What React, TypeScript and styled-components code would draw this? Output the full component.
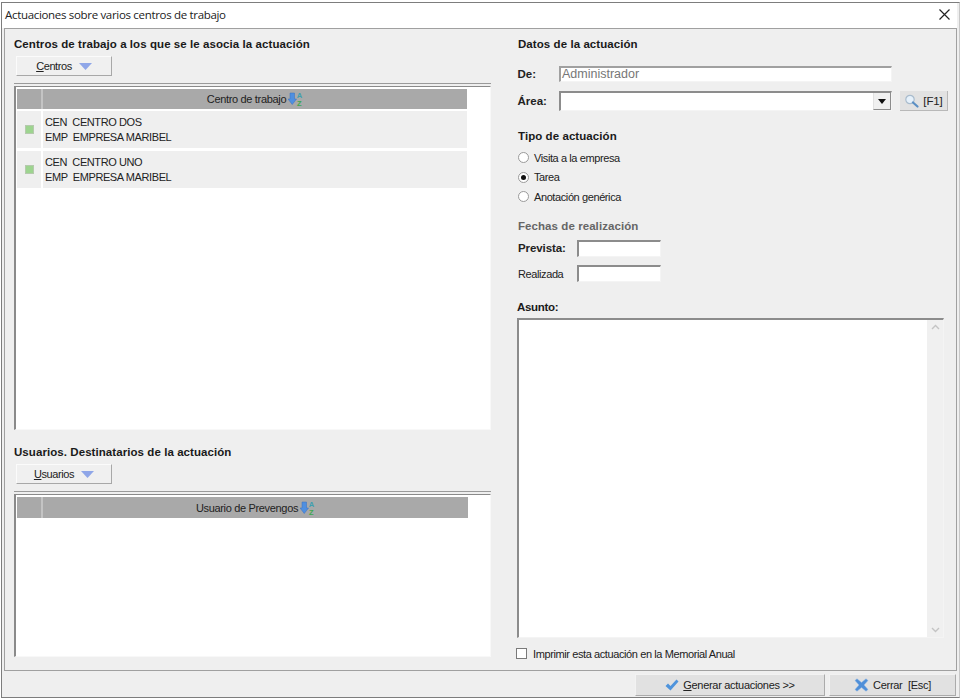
import * as React from 'react';
import styled, { createGlobalStyle } from 'styled-components';

const Check = () => (
  <svg width="14" height="12" viewBox="0 0 14 12">
    <path d="M0.5 7 L3 4.5 L5.5 7 L11.5 0.5 L13.5 2.5 L5.5 11.5 Z" fill="#4f94dc" />
  </svg>
);

const Cross = () => (
  <svg width="15" height="14" viewBox="0 0 15 14">
    <path d="M1 2.5 L3 0.8 L7.5 4.5 L12 0.8 L14 2.5 L10 7 L14 11.5 L12 13.2 L7.5 9.5 L3 13.2 L1 11.5 L5 7 Z" fill="#4f8fd8" stroke="#8cb6e6" strokeWidth="0.5" />
  </svg>
);

const Lens = () => (
  <svg width="15" height="14" viewBox="0 0 15 14">
    <circle cx="6" cy="5.5" r="4.2" fill="#e6f1fb" stroke="#a9bccd" strokeWidth="1.2" />
    <path d="M9 8.5 L13.5 12.5" stroke="#5b8fc4" strokeWidth="2.2" strokeLinecap="round" />
  </svg>
);

const SortIcon = () => (
  <svg width="15" height="16" viewBox="0 0 15 16">
    <path d="M2 2 H6.5 V8 H8.5 L4.25 13.5 L0 8 H2 Z" fill="#4f8fe0" stroke="#3a70c0" strokeWidth="0.5" />
    <text x="8.8" y="7" fontSize="7.5" fontWeight="bold" fill="#3f9fb0" fontFamily="Liberation Sans, sans-serif">A</text>
    <text x="9" y="14.5" fontSize="7.5" fontWeight="bold" fill="#3fa84f" fontFamily="Liberation Sans, sans-serif">Z</text>
  </svg>
);

const Caret = () => (
  <svg width="13" height="7" viewBox="0 0 13 7">
    <path d="M0 0 H13 L6.5 7 Z" fill="#8fa6e8" />
  </svg>
);

const Chevron = ({ down }: { down?: boolean }) => (
  <svg width="9" height="6" viewBox="0 0 9 6">
    <path d={down ? 'M1 1 L4.5 4.5 L8 1' : 'M1 5 L4.5 1.5 L8 5'} fill="none" stroke="#c4c4c4" strokeWidth="1.4" />
  </svg>
);

const centros = ['CENTRO DOS', 'CENTRO UNO'];

export default function App() {
  return (
    <>
      <GlobalStyle />
      <Window>
        <TitleBar>
          <TitleText>Actuaciones sobre varios centros de trabajo</TitleText>
          <CloseGlyph width="11" height="11" viewBox="0 0 11 11">
            <path d="M0.5 0.5 L10.5 10.5 M10.5 0.5 L0.5 10.5" stroke="#222" strokeWidth="1.2" />
          </CloseGlyph>
        </TitleBar>
        <Panel>
          <LeftColumn>
            <SectionTitle>Centros de trabajo a los que se le asocia la actuación</SectionTitle>
            <MenuButton>
              <span><u>C</u>entros</span>
              <Caret />
            </MenuButton>
            <GridFrame $height={347}>
              <GridBox>
                <HeaderRow $width={450} $height={20}>
                  <HeaderCell />
                  <HeaderCell>Centro de trabajo <SortIcon /></HeaderCell>
                </HeaderRow>
                {centros.map((centro) => (
                  <DataRow key={centro}>
                    <StatusCell><StatusDot /></StatusCell>
                    <TextCell>
                      <div>{`CEN  ${centro}`}</div>
                      <div>{'EMP  EMPRESA MARIBEL'}</div>
                    </TextCell>
                  </DataRow>
                ))}
              </GridBox>
            </GridFrame>
            <SecondTitle>Usuarios. Destinatarios de la actuación</SecondTitle>
            <MenuButton>
              <span><u>U</u>suarios</span>
              <Caret />
            </MenuButton>
            <GridFrame $height={166}>
              <GridBox>
                <HeaderRow $width={451} $height={21}>
                  <HeaderCell />
                  <HeaderCell>Usuario de Prevengos <SortIcon /></HeaderCell>
                </HeaderRow>
              </GridBox>
            </GridFrame>
          </LeftColumn>
          <RightColumn>
            <DataTitle>Datos de la actuación</DataTitle>
            <DeRow>
              <FieldLabel>De:</FieldLabel>
              <NameInput>Administrador</NameInput>
            </DeRow>
            <AreaRow>
              <FieldLabel>Área:</FieldLabel>
              <Combo>
                <ComboArrow>
                  <svg width="8" height="5" viewBox="0 0 8 5"><path d="M0 0 H8 L4 5 Z" fill="#111" /></svg>
                </ComboArrow>
              </Combo>
              <LookupButton><Lens /> [F1]</LookupButton>
            </AreaRow>
            <TypeTitle>Tipo de actuación</TypeTitle>
            <RadioGroup>
              <RadioRow><Radio /><span>Visita a la empresa</span></RadioRow>
              <RadioRow><Radio $checked /><span>Tarea</span></RadioRow>
              <RadioRow><Radio /><span>Anotación genérica</span></RadioRow>
            </RadioGroup>
            <DatesTitle>Fechas de realización</DatesTitle>
            <DateRow $top={7}>
              <DateLabel $bold>Prevista:</DateLabel>
              <DateInput />
            </DateRow>
            <DateRow $top={8}>
              <DateLabel>Realizada</DateLabel>
              <DateInput />
            </DateRow>
            <SubjectTitle>Asunto:</SubjectTitle>
            <SubjectBox>
              <ScrollTrack>
                <Chevron />
                <Chevron down />
              </ScrollTrack>
            </SubjectBox>
            <PrintRow>
              <CheckBox />
              <span>Imprimir esta actuación en la Memorial Anual</span>
            </PrintRow>
          </RightColumn>
        </Panel>
        <Footer>
          <FooterButton $width={190}>
            <Check />
            <span><u>G</u>enerar actuaciones &gt;&gt;</span>
          </FooterButton>
          <FooterButton $width={127}>
            <Cross />
            <span>{'Cerrar  [Esc]'}</span>
          </FooterButton>
        </Footer>
      </Window>
    </>
  );
}

const GlobalStyle = createGlobalStyle`
  html, body {
    margin: 0;
    background: #ffffff;
    font-family: "Liberation Sans", Arial, sans-serif;
    font-size: 11px;
    color: #222222;
  }
`;

const Window = styled.div`
  box-sizing: border-box;
  width: 959px;
  height: 696px;
  margin: 2px 0 0 1px;
  padding: 0 2px 0 2px;
  display: flex;
  flex-direction: column;
  background: #efefef;
  border: 1px solid #7d7d7d;
  border-right-color: #c8c8c8;
`;

const TitleBar = styled.div`
  height: 25px;
  box-sizing: border-box;
  flex: none;
  margin-left: -2px;
  padding: 0 7px 2px 3px;
  display: flex;
  align-items: center;
  justify-content: space-between;
  background: #ffffff;
`;

const TitleText = styled.span`
  font-family: "Open Sans", sans-serif;
  font-size: 11.5px;
  letter-spacing: -0.32px;
  color: #222222;
`;

const CloseGlyph = styled.svg`
  display: block;
`;

const Panel = styled.div`
  box-sizing: border-box;
  height: 643px;
  flex: none;
  display: flex;
  gap: 26px;
  padding: 9px 0 0 9px;
  border: 1px solid #a0a0a0;
  background: #efefef;
`;

const LeftColumn = styled.div`
  width: 477px;
  flex: none;
  display: flex;
  flex-direction: column;
`;

const RightColumn = styled.div`
  width: 427px;
  flex: none;
  display: flex;
  flex-direction: column;
`;

const SectionTitle = styled.div`
  height: 13px;
  line-height: 13px;
  font-size: 11.5px;
  font-weight: bold;
  letter-spacing: 0.07px;
  color: #1a1a1a;
  white-space: nowrap;
`;

const SecondTitle = styled(SectionTitle)`
  margin-top: 16px;
`;

const DataTitle = styled(SectionTitle)`
  padding-left: 1px;
`;

const MenuButton = styled.div`
  box-sizing: border-box;
  width: 96px;
  height: 20px;
  margin: 5px 0 0 2px;
  display: flex;
  align-items: center;
  justify-content: center;
  gap: 7px;
  background: #f0f0f0;
  border: 1px solid #fbfbfb;
  border-right-color: #a8a8a8;
  border-bottom-color: #a8a8a8;
  letter-spacing: -0.4px;
`;

const GridFrame = styled.div<{ $height: number }>`
  box-sizing: border-box;
  height: ${(p) => p.$height}px;
  margin-top: 7px;
  padding-top: 2px;
  display: flex;
  border-top: 1px solid #9a9a9a;
`;

const GridBox = styled.div`
  box-sizing: border-box;
  flex: 1;
  padding: 2px 0 0 1px;
  background: #ffffff;
  border-top: 1px solid #8a8a8a;
  border-left: 2px solid #8a8a8a;
  border-right: 1px solid #f8f8f8;
  border-bottom: 1px solid #f8f8f8;
`;

const HeaderRow = styled.div<{ $width: number; $height: number }>`
  width: ${(p) => p.$width}px;
  height: ${(p) => p.$height}px;
  display: grid;
  grid-template-columns: 24px 1fr;
  gap: 2px;
  background: #c4c4c4;
`;

const HeaderCell = styled.div`
  display: flex;
  align-items: center;
  justify-content: center;
  gap: 2px;
  background: #a9a9a9;
  letter-spacing: -0.33px;
  color: #222222;
`;

const DataRow = styled.div`
  width: 450px;
  height: 37px;
  margin-top: 2px;
  margin-bottom: 3px;
  display: grid;
  grid-template-columns: 24px 1fr;
  gap: 2px;
  & + & {
    margin-top: 0;
  }
`;

const StatusCell = styled.div`
  display: flex;
  align-items: center;
  justify-content: center;
  background: #efefef;
`;

const StatusDot = styled.div`
  box-sizing: border-box;
  width: 9px;
  height: 9px;
  background: #9dd48f;
  border: 1px solid #b5c9ad;
`;

const TextCell = styled.div`
  padding: 4px 0 0 2px;
  line-height: 15px;
  background: #efefef;
  white-space: pre;
  letter-spacing: -0.4px;
`;

const DeRow = styled.div`
  height: 16px;
  margin-top: 15px;
  display: flex;
  align-items: center;
`;

const AreaRow = styled.div`
  height: 20px;
  margin-top: 9px;
  display: flex;
  align-items: center;
`;

const FieldLabel = styled.div`
  width: 42px;
  box-sizing: border-box;
  padding-left: 0.5px;
  font-size: 11.5px;
  font-weight: bold;
  flex: none;
`;

const SunkenField = styled.div`
  box-sizing: border-box;
  flex: none;
  background: #ffffff;
  border-top: 2px solid #8c8c8c;
  border-left: 2px solid #8c8c8c;
  border-right: 1px solid #f4f4f4;
  border-bottom: 1px solid #f4f4f4;
`;

const NameInput = styled(SunkenField)`
  width: 333px;
  height: 16px;
  padding-left: 1px;
  line-height: 13px;
  font-size: 12.5px;
  color: #777777;
  border-top-color: #a0a0a0;
  border-left-color: #a0a0a0;
`;

const Combo = styled(SunkenField)`
  width: 333px;
  height: 20px;
  display: flex;
  justify-content: flex-end;
`;

const ComboArrow = styled.div`
  width: 16px;
  display: flex;
  align-items: center;
  justify-content: center;
  background: #f0f0f0;
  border-left: 1px solid #e2e2e2;
  border-right: 1px solid #8c8c8c;
  border-bottom: 1px solid #8c8c8c;
`;

const LookupButton = styled.div`
  box-sizing: border-box;
  width: 48px;
  height: 20px;
  margin-left: 8px;
  flex: none;
  display: flex;
  align-items: center;
  justify-content: center;
  gap: 4px;
  background: #e2e2e2;
  border-right: 1px solid #b8b8b8;
  border-bottom: 1px solid #b8b8b8;
  font-size: 11.5px;
  letter-spacing: -0.1px;
`;

const TypeTitle = styled(SectionTitle)`
  margin-top: 19px;
  padding-left: 1px;
`;

const RadioGroup = styled.div`
  margin-top: 5px;
  display: flex;
  flex-direction: column;
`;

const RadioRow = styled.div`
  height: 19.5px;
  padding-left: 1px;
  display: flex;
  align-items: center;
  gap: 5px;
  letter-spacing: -0.4px;
`;

const Radio = styled.span<{ $checked?: boolean }>`
  box-sizing: border-box;
  width: 11px;
  height: 11px;
  flex: none;
  display: flex;
  align-items: center;
  justify-content: center;
  border-radius: 50%;
  background: #ffffff;
  border: 1px solid #9a9a9a;
  &::after {
    content: '';
    width: 5px;
    height: 5px;
    border-radius: 50%;
    background: ${(p) => (p.$checked ? '#111111' : 'transparent')};
  }
`;

const DatesTitle = styled(SectionTitle)`
  margin-top: 13px;
  padding-left: 1px;
  color: #666666;
`;

const DateRow = styled.div<{ $top: number }>`
  height: 17px;
  margin-top: ${(p) => p.$top}px;
  display: flex;
  align-items: center;
`;

const DateLabel = styled.div<{ $bold?: boolean }>`
  width: 60px;
  box-sizing: border-box;
  padding: ${(p) => (p.$bold ? '0 0 0 1px' : '1px 0 0 1px')};
  flex: none;
  font-size: ${(p) => (p.$bold ? '11.5px' : '11px')};
  font-weight: ${(p) => (p.$bold ? 'bold' : 'normal')};
  letter-spacing: ${(p) => (p.$bold ? '-0.1px' : '-0.4px')};
`;

const DateInput = styled(SunkenField)`
  width: 84px;
  height: 17px;
`;

const SubjectTitle = styled(SectionTitle)`
  margin-top: 19px;
  letter-spacing: -0.3px;
`;

const SubjectBox = styled(SunkenField)`
  width: 427px;
  height: 320px;
  margin-top: 4px;
  display: flex;
  justify-content: flex-end;
`;

const ScrollTrack = styled.div`
  width: 16px;
  padding: 4px 0;
  display: flex;
  flex-direction: column;
  align-items: center;
  justify-content: space-between;
  background: #f0f0f0;
`;

const PrintRow = styled.div`
  height: 12px;
  margin: 10px 0 0 -1px;
  display: flex;
  align-items: center;
  gap: 6px;
  letter-spacing: -0.4px;
`;

const CheckBox = styled.span`
  box-sizing: border-box;
  width: 11px;
  height: 11px;
  flex: none;
  background: #ffffff;
  border: 1px solid #7a7a7a;
`;

const Footer = styled.div`
  flex: 1;
  padding: 3px 1px 0 0;
  display: flex;
  justify-content: flex-end;
  align-items: flex-start;
  gap: 4px;
`;

const FooterButton = styled.div<{ $width: number }>`
  box-sizing: border-box;
  width: ${(p) => p.$width}px;
  height: 22px;
  display: flex;
  align-items: center;
  justify-content: center;
  gap: 4px;
  background: #e1e1e1;
  border-top: 1px solid #f2f2f2;
  border-left: 1px solid #f2f2f2;
  border-right: 1px solid #ababab;
  border-bottom: 1px solid #ababab;
  white-space: pre;
  letter-spacing: -0.3px;
`;
